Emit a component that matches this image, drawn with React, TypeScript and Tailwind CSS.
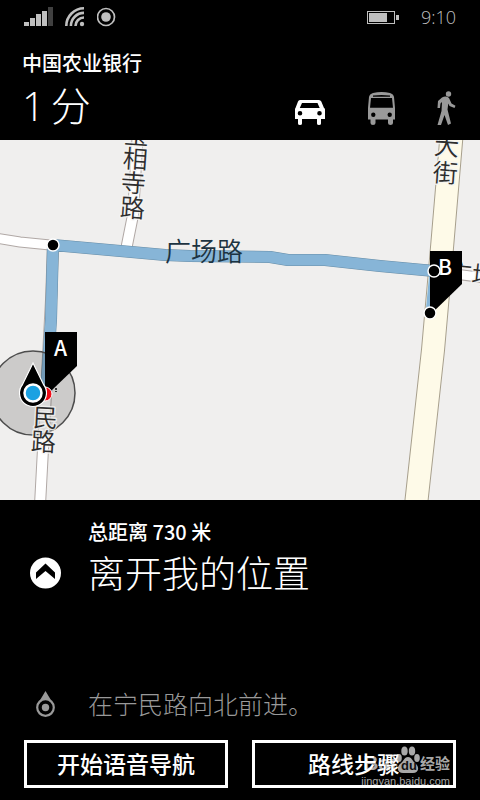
import type { ReactNode } from 'react';

const road = { fill: 'none', strokeLinejoin: 'round' as const };

function StatusBar() {
  return (
    <div className="flex h-[34px] items-center justify-between px-6 text-[#bfbfbf]">
      <div className="flex items-center gap-3">
        <svg className="h-5 w-[29px]" viewBox="0 0 29 20" role="img" aria-label="Signal">
          <g fill="#bfbfbf">
            <rect x="0" y="15" width="5" height="4" />
            <rect x="6" y="11" width="5" height="8" />
            <rect x="12" y="7" width="5" height="12" />
            <rect x="18" y="4" width="5" height="15" />
          </g>
          <rect x="24" y="0" width="5" height="19" fill="#404040" />
        </svg>
        <svg className="h-5 w-5" viewBox="0 0 20 20" role="img" aria-label="Wi-Fi">
          <g fill="none" stroke="#bfbfbf" strokeWidth="2.6">
            <path d="M1.300 19A17.700 17.700 0 0 1 19 1.300" />
            <path d="M5.900 19A13.100 13.100 0 0 1 19 5.900" />
            <path d="M10.500 19A8.500 8.500 0 0 1 19 10.500" />
          </g>
          <circle cx="17" cy="17" r="2.200" fill="#bfbfbf" />
        </svg>
        <svg className="h-5 w-5" viewBox="0 0 20 20" role="img" aria-label="Location">
          <circle cx="9" cy="10" r="8.500" fill="none" stroke="#bfbfbf" strokeWidth="1.700" />
          <circle cx="9" cy="10" r="4.800" fill="#bfbfbf" />
        </svg>
      </div>
      <div className="flex items-center gap-[22px]">
        <svg className="h-[13px] w-8" viewBox="0 0 32 13" role="img" aria-label="Battery">
          <rect x="0.500" y="0.500" width="27" height="12" fill="none" stroke="#bfbfbf" />
          <rect x="2" y="2" width="18" height="9" fill="#bfbfbf" />
          <rect x="29" y="4" width="3" height="5" fill="#bfbfbf" />
        </svg>
        <span className="font-['Open_Sans','Noto_Sans',sans-serif] text-[18px] leading-6 font-light">9:10</span>
      </div>
    </div>
  );
}

function ModeButton({ label, children }: { label: string; children: ReactNode }) {
  return (
    <button type="button" aria-label={label} className="block">
      {children}
    </button>
  );
}

function Header() {
  return (
    <header className="h-[106px] pr-6 pl-[22px]">
      <h2 className="pt-[18px] text-[20px] leading-6 font-medium">中国农业银行</h2>
      <div className="flex items-center justify-between">
        <p className="flex gap-[6px] text-[40px] leading-[60px] font-light">
          <span>1</span>
          <span>分</span>
        </p>
        <div className="flex items-center gap-[41px] pt-1">
          <ModeButton label="驾车">
            <svg className="h-[34px] w-8" viewBox="295 91 32 34" fill="#fff">
              <path
                fillRule="evenodd"
                d="M300 100H319Q320.500 100 321.300 101.500L324 108Q325 108 325 109.500V119H321V123.500Q321 125 319 125T317 123.500V119H302V123.500Q302 125 300 125T298 123.500V119H295V109.500Q295 108 295.500 108L298 101.500Q298.500 100 300 100ZM302 103L299.800 108H319.700L317.500 103ZM300 111A2.300 2.300 0 1 0 300 115.600A2.300 2.300 0 1 0 300 111ZM319.500 111A2.300 2.300 0 1 0 319.500 115.600A2.300 2.300 0 1 0 319.500 111Z"
              />
            </svg>
          </ModeButton>
          <ModeButton label="公交">
            <svg className="h-[34px] w-7" viewBox="368 91 28 34" fill="#999">
              <path
                fillRule="evenodd"
                d="M373 93Q381.500 91 390 93Q393.500 94 394 97L395 108V119.500H393V123Q393 125 390.500 125T388 123V119.500H375.500V123Q375.500 125 373 125T370.500 123V119.500H368V108L369 97Q369.500 94 373 93ZM373 95.500V96.800H390V95.500Q381.500 94.300 373 95.500ZM371 98L370 107.800H393L392 98ZM373.300 112.500A2.200 2.200 0 1 0 373.300 116.900A2.200 2.200 0 1 0 373.300 112.500ZM389.700 112.500A2.200 2.200 0 1 0 389.700 116.900A2.200 2.200 0 1 0 389.700 112.500Z"
              />
            </svg>
          </ModeButton>
          <ModeButton label="步行">
            <svg className="h-[34px] w-[19px]" viewBox="437 91 19 34" fill="#999">
              <circle cx="448.500" cy="94" r="2.700" />
              <path d="M442 97.500Q446 95.500 449 98L451.500 103.500L455.500 105.700L454.500 108L449.500 106L448.300 103.500L447.500 109.500L451 123.500L448 125L444.500 115L441 125H437.500L441.500 111L442 102L440.500 103.500L440 108H437.500L438 101Z" />
            </svg>
          </ModeButton>
        </div>
      </div>
    </header>
  );
}

function RouteMap() {
  return (
    <svg
      className="block h-[360px] w-full bg-[#f0efee] font-['Noto_Sans_CJK_SC',sans-serif]"
      viewBox="0 140 480 360"
      preserveAspectRatio="xMidYMid slice"
      role="img"
      aria-label="路线地图"
    >
      <g {...road}>
        <path d="M-5 238L20 242L60 246M425 270L485 278" stroke="#b0a8a5" strokeWidth="11" />
        <path d="M138 130L133 215L126 250" stroke="#b0a8a5" strokeWidth="12" />
        <path d="M53 245L51 300L46 393L40 505" stroke="#b0a8a5" strokeWidth="12" />
        <path d="M-5 238L20 242L60 246M425 270L485 278" stroke="#fff" strokeWidth="9" />
        <path d="M138 130L133 215L126 250" stroke="#fff" strokeWidth="10" />
        <path d="M53 245L51 300L46 393L40 505" stroke="#fff" strokeWidth="10" />
        <path d="M452 130L440 271L433 350L416 505" stroke="#a79f8c" strokeWidth="24" />
        <path d="M452 130L440 271L433 350L416 505" stroke="#fefae8" strokeWidth="22" />
        <path d="M434 271L430 314" stroke="#87b5d7" strokeWidth="9" />
        <path
          d="M434 271L380 266L325 260H288L270 257L190 256L165 255L53 245L51 320L46 393"
          stroke="#668ca6"
          strokeWidth="12"
        />
        <path
          d="M434 271L380 266L325 260H288L270 257L190 256L165 255L53 245L51 320L46 393"
          stroke="#87b5d7"
          strokeWidth="11"
        />
      </g>

      <circle cx="33" cy="393" r="42" fill="#000" fillOpacity="0.15" stroke="#4d4d4d" strokeWidth="1.500" />

      <g
        fill="#2d2d2d"
        fontSize="25"
        fontWeight="350"
        stroke="#f5f4f3"
        strokeWidth="3"
        strokeLinejoin="round"
        paintOrder="stroke"
        strokeOpacity="0.8"
      >
        <text x="124" y="144" transform="rotate(4 136 135)">宝</text>
        <text x="123" y="168" transform="rotate(4 134 157)">相</text>
        <text x="121" y="192" transform="rotate(4 132 182)">寺</text>
        <text x="120" y="217" transform="rotate(4 131 208)">路</text>
        <text x="434" y="155" transform="rotate(4 446 147)">大</text>
        <text x="433" y="182" transform="rotate(4 445 172)">街</text>
        <text x="33" y="427" transform="rotate(3 45 418)">民</text>
        <text x="31" y="451" transform="rotate(3 43 442)">路</text>
        <text x="446" y="281" transform="rotate(6 446 281)">广场路</text>
      </g>
      <text x="165" y="261" fontSize="26" fontWeight="350" fill="#1d3341">广场路</text>

      <path d="M430 251H462V284L430 315Z" fill="#000" />
      <path d="M45 332H77V366L52 390L45 394Z" fill="#000" />
      <path d="M55 388H57V390H55ZM55 391H57V392H55Z" fill="#333" />
      <circle cx="45" cy="394" r="7" fill="#f00c18" stroke="#fff" strokeWidth="1" />
      <path
        d="M33 363L43.500 384.500A13.500 13.500 0 1 1 22.500 384.500Z"
        fill="#000"
        stroke="#fff"
        strokeWidth="1.200"
      />
      <circle cx="33" cy="393" r="8.500" fill="#1ba1e2" stroke="#fff" strokeWidth="2.500" />
      <g fill="#000" stroke="#fff" strokeWidth="1.500">
        <circle cx="53" cy="245" r="6" />
        <circle cx="434" cy="271" r="6" />
        <circle cx="430" cy="313" r="6" />
      </g>
      <g fill="#fff" fontSize="21" fontWeight="500">
        <text x="54" y="356">A</text>
        <text x="438" y="275">B</text>
      </g>
    </svg>
  );
}

function Watermark() {
  return (
    <div className="pointer-events-none absolute right-[30px] bottom-[13px] flex flex-col items-end text-[#a8a8a8]">
      <div className="flex items-end">
        <span className="font-['Liberation_Sans',sans-serif] text-[21px] leading-6 font-bold">Bai</span>
        <svg className="h-[30px] w-6" viewBox="0 0 24 30">
          <g fill="#a8a8a8">
            <ellipse cx="8.500" cy="6" rx="3.200" ry="4.500" />
            <ellipse cx="16" cy="6" rx="3.200" ry="4.500" />
            <ellipse cx="3" cy="13" rx="2.800" ry="4" />
            <ellipse cx="21" cy="13" rx="2.800" ry="4" />
            <path d="M12 12C16 12 16 16 20 19C24 23 22 28 17 28H7C2 28 0 23 4 19C8 16 8 12 12 12Z" />
          </g>
          <text x="5" y="25" fontSize="13" fontWeight="700" fontFamily="Liberation Sans, sans-serif" fill="#111">
            du
          </text>
        </svg>
        <span className="text-[15px] leading-6 font-bold">经验</span>
      </div>
      <span className="font-['Liberation_Sans',sans-serif] text-[11px] leading-3">jingyan.baidu.com</span>
    </div>
  );
}

export default function App() {
  return (
    <main className="flex min-h-screen flex-col bg-black font-['Open_Sans','Noto_Sans_CJK_SC',sans-serif] text-white">
      <StatusBar />
      <Header />
      <RouteMap />
      <section className="relative flex flex-1 flex-col px-6 pt-5 pb-3">
        <ol className="flex flex-1 flex-col justify-between pb-[18px]">
          <li className="flex">
            <div className="w-16 shrink-0 pt-[37px] pl-[6px]">
              <svg className="h-8 w-8" viewBox="0 0 32 32" aria-hidden="true">
                <circle cx="15.500" cy="16" r="15.500" fill="#fff" />
                <path d="M15.500 6.500L25 15.500V22L15.500 14L6 22V15.500Z" fill="#000" />
              </svg>
            </div>
            <div>
              <p className="font-['Noto_Sans_CJK_SC',sans-serif] text-[20px] leading-6 font-medium">总距离 730 米</p>
              <h1 className="text-[37px] leading-[60px] font-light">离开我的位置</h1>
            </div>
          </li>
          <li className="flex items-center text-[#999]">
            <div className="w-16 shrink-0 pl-3">
              <svg className="h-[26px] w-5" viewBox="0 0 20 26" aria-hidden="true">
                <path d="M9.500 0L15.500 10Q9.500 6 3.500 10Z" fill="#999" />
                <circle cx="9.500" cy="16.500" r="8.300" fill="none" stroke="#999" strokeWidth="2.200" />
                <circle cx="9.500" cy="16.500" r="3.700" fill="#999" />
              </svg>
            </div>
            <p className="text-[25px] leading-9 font-light">在宁民路向北前进。</p>
          </li>
        </ol>
        <div className="relative z-10 grid grid-cols-2 gap-6">
          <button type="button" className="h-12 border-3 border-white text-[23px] leading-8 font-medium">
            开始语音导航
          </button>
          <button type="button" className="h-12 border-3 border-white text-[23px] leading-8 font-medium">
            路线步骤
          </button>
        </div>
        <Watermark />
      </section>
    </main>
  );
}
